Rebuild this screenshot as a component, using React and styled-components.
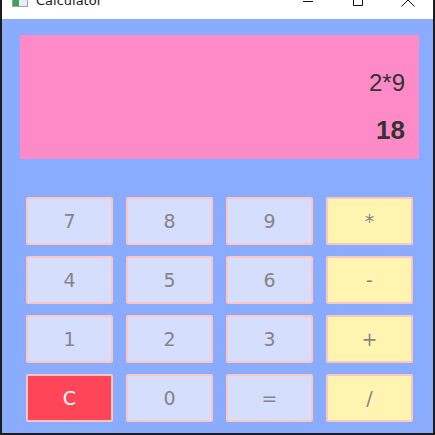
import React from 'react'
import styled, { createGlobalStyle } from 'styled-components'

const GlobalStyle = createGlobalStyle`
    html, body {
        margin: 0;
        padding: 0;
        background: #ffffff;
    }
    * {
        box-sizing: border-box;
    }
`

const Window = styled.div`
    width: 435px;
    height: 435px;
    display: flex;
    flex-direction: column;
    border-left: 2px solid #1c1c1c;
    border-right: 2px solid #1c1c1c;
    border-bottom: 2px solid #1c1c1c;
    overflow: hidden;
`

const TitleBar = styled.div`
    height: 19px;
    flex-shrink: 0;
    background: #ffffff;
    display: flex;
    align-items: flex-start;
    overflow: hidden;
    font-family: "DejaVu Sans", "Liberation Sans", sans-serif;
`

const TitleIcon = styled.div`
    width: 16px;
    height: 14px;
    margin: -7px 0 0 10px;
    border: 1px solid #9aa3ad;
    background: linear-gradient(90deg, #3aa35a 0 45%, #e8eef3 45% 100%);
`

const TitleText = styled.div`
    margin: -7px 0 0 8px;
    font-size: 13px;
    line-height: 16px;
    color: #1a1a1a;
`

const Controls = styled.div`
    margin-left: auto;
    display: flex;
    align-items: flex-start;
`

const Control = styled.div`
    width: 50px;
    height: 19px;
    display: flex;
    justify-content: center;
    align-items: flex-start;
`

const Client = styled.div`
    flex: 1;
    background: #8aacfe;
    padding: 16px 14px 0 18px;
    display: flex;
    flex-direction: column;
`

const Display = styled.div`
    height: 124px;
    background: #ff8ac8;
    display: flex;
    flex-direction: column;
    align-items: flex-end;
    padding: 35px 14px 0 0;
    font-family: "Liberation Sans", Arial, sans-serif;
    color: #333333;
`

const Expression = styled.div`
    font-size: 24px;
    line-height: 26px;
`

const Result = styled.div`
    font-size: 26px;
    font-weight: bold;
    line-height: 28px;
    margin-top: 20px;
`

const Keypad = styled.div`
    margin-top: 38px;
    margin-left: 6px;
    display: grid;
    grid-template-columns: 87px 87px 87px 87px;
    grid-auto-rows: 48px;
    column-gap: 13px;
    row-gap: 11px;
`

const Key = styled.button`
    border: 2px solid #ffc6c0;
    border-radius: 2px;
    background: ${p => p.$kind === 'op' ? '#fff5b0' : p.$kind === 'clear' ? '#ff4558' : '#d6defe'};
    color: ${p => p.$kind === 'clear' ? '#ffffff' : '#858585'};
    font-family: "DejaVu Sans", "Liberation Sans", sans-serif;
    font-size: 19px;
    padding: 0;
    display: flex;
    align-items: center;
    justify-content: center;
`

const keys = [
    ['7', 'num'], ['8', 'num'], ['9', 'num'], ['*', 'op'],
    ['4', 'num'], ['5', 'num'], ['6', 'num'], ['-', 'op'],
    ['1', 'num'], ['2', 'num'], ['3', 'num'], ['+', 'op'],
    ['C', 'clear'], ['0', 'num'], ['=', 'num'], ['/', 'op'],
]

export default function App() {
    return (
        <>
            <GlobalStyle />
            <Window>
                <TitleBar>
                    <TitleIcon />
                    <TitleText>Calculator</TitleText>
                    <Controls>
                        <Control>
                            <svg width="12" height="4" viewBox="0 0 12 4">
                                <path d="M1 1.5h10" stroke="#111" strokeWidth="1" />
                            </svg>
                        </Control>
                        <Control>
                            <svg width="12" height="6" viewBox="0 0 12 6">
                                <path d="M1.5 -4v9.5h9v-9.5" stroke="#111" strokeWidth="1" fill="none" />
                            </svg>
                        </Control>
                        <Control>
                            <svg width="14" height="7" viewBox="0 0 14 7">
                                <path d="M0.5 -6.5L13.5 6.5M13.5 -6.5L0.5 6.5" stroke="#111" strokeWidth="1" fill="none" />
                            </svg>
                        </Control>
                    </Controls>
                </TitleBar>
                <Client>
                    <Display>
                        <Expression>2*9</Expression>
                        <Result>18</Result>
                    </Display>
                    <Keypad>
                        {keys.map(([label, kind]) =>
                            <Key key={label} $kind={kind}>{label}</Key>
                        )}
                    </Keypad>
                </Client>
            </Window>
        </>
    )
}
